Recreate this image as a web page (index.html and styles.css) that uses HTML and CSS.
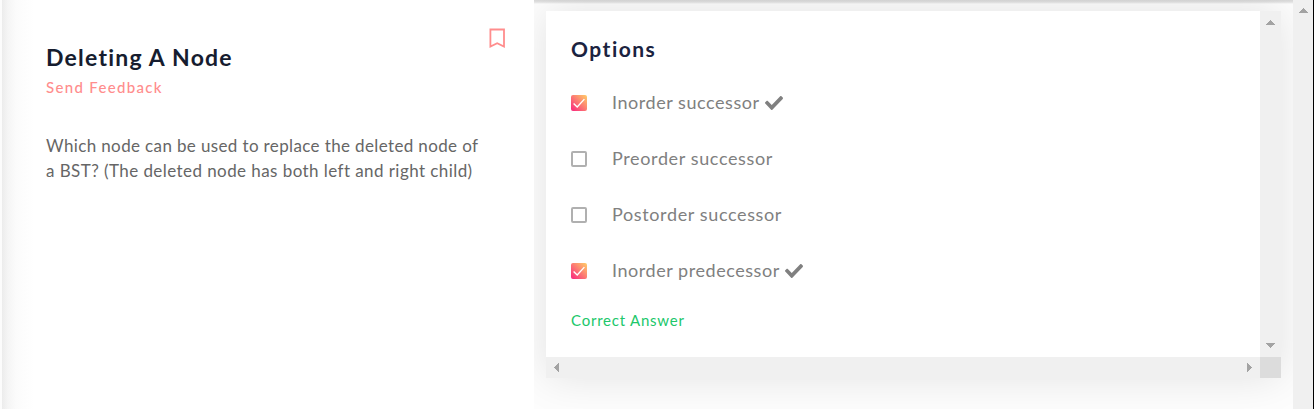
FILE: index.html
```
<!DOCTYPE html>
<html lang="en">
<head>
<meta charset="utf-8">
<title>Deleting A Node</title>
<link rel="stylesheet" href="styles.css">
</head>
<body>
<main class="page">
  <section class="problem">
    <header class="problem-head">
      <h1 class="title">Deleting A Node</h1>
      <svg class="bookmark" width="16" height="20" viewBox="0 0 16 20"><path d="M1.400 1.500h13.600v17L8.200 15.200l-6.800 3.300z" fill="none" stroke="#ff8d8d" stroke-width="1.800"/></svg>
    </header>
    <a class="feedback">Send Feedback</a>
    <p class="question">Which node can be used to replace the deleted node of<br><span class="second-line">a BST? (The deleted node has both left and right child)</span></p>
  </section>
  <section class="answers">
    <div class="scroller">
      <div class="card">
        <h2 class="heading">Options</h2>
        <ul class="options">
          <li class="option">
            <span class="box checked"><svg width="16" height="16" viewBox="0 0 16 16"><path d="M2.600 8.500l3.600 3.400 7.200-7.800" fill="none" stroke="#fff" stroke-width="1.400"/></svg></span>
            <span class="label">Inorder successor</span>
            <svg class="tick" width="18" height="14" viewBox="0 65 512 382" preserveAspectRatio="none"><path d="M173.900 439.400L7.500 273c-10-10-10-26.200 0-36.200l36.200-36.200c10-10 26.200-10 36.200 0L192 312.700 432.100 72.600c10-10 26.200-10 36.200 0l36.200 36.200c10 10 10 26.200 0 36.200L210.100 439.400c-10 10-26.200 10-36.200 0z" fill="#808080"/></svg>
          </li>
          <li class="option">
            <span class="box"></span>
            <span class="label wide">Preorder successor</span>
          </li>
          <li class="option">
            <span class="box"></span>
            <span class="label wide">Postorder successor</span>
          </li>
          <li class="option">
            <span class="box checked"><svg width="16" height="16" viewBox="0 0 16 16"><path d="M2.600 8.500l3.600 3.400 7.200-7.800" fill="none" stroke="#fff" stroke-width="1.400"/></svg></span>
            <span class="label">Inorder predecessor</span>
            <svg class="tick" width="18" height="14" viewBox="0 65 512 382" preserveAspectRatio="none"><path d="M173.900 439.400L7.500 273c-10-10-10-26.200 0-36.200l36.200-36.200c10-10 26.200-10 36.200 0L192 312.700 432.100 72.600c10-10 26.200-10 36.200 0l36.200 36.200c10 10 10 26.200 0 36.200L210.100 439.400c-10 10-26.200 10-36.200 0z" fill="#808080"/></svg>
          </li>
        </ul>
        <p class="result">Correct Answer</p>
      </div>
      <div class="bar vertical">
        <svg width="9" height="5" viewBox="0 0 9 5" shape-rendering="crispEdges"><path d="M0 5L4.500 0 9 5z" fill="#a3a3a3"/></svg>
        <svg width="9" height="5" viewBox="0 0 9 5" shape-rendering="crispEdges"><path d="M0 0L4.500 5 9 0z" fill="#a3a3a3"/></svg>
      </div>
      <div class="bar horizontal">
        <svg width="5" height="9" viewBox="0 0 5 9" shape-rendering="crispEdges"><path d="M5 0L0 4.500 5 9z" fill="#a3a3a3"/></svg>
        <svg width="5" height="9" viewBox="0 0 5 9" shape-rendering="crispEdges"><path d="M0 0L5 4.500 0 9z" fill="#a3a3a3"/></svg>
      </div>
      <div class="corner"></div>
    </div>
  </section>
  <div class="page-bar">
    <svg width="9" height="5" viewBox="0 0 9 5" shape-rendering="crispEdges"><path d="M0 5L4.500 0 9 5z" fill="#a3a3a3"/></svg>
  </div>
</main>
</body>
</html>
```
FILE: styles.css
```
* { box-sizing: border-box; }
body {
  margin: 0;
  overflow: hidden;
  font-family: Lato, "Open Sans", sans-serif;
}
h1, h2, p, ul { margin: 0; padding: 0; }
svg { display: block; flex: none; }
.page {
  display: grid;
  grid-template-columns: 532px 759px 20px;
  width: 1314px;
  height: 409px;
  border-left: 2px solid #fcfcfc;
  border-right: 1px solid #000;
}
.problem {
  padding: 28px 28px 0 44px;
  background: linear-gradient(90deg, #ececec 0, #f5f5f5 6px, #fbfbfb 14px, #fff 32px);
  white-space: nowrap;
}
.problem-head {
  display: flex;
  justify-content: space-between;
  height: 45px;
}
.bookmark { margin-right: 1px; }
.title {
  padding-top: 14px;
  font-size: 23px;
  line-height: 30px;
  font-weight: 700;
  letter-spacing: 1.22px;
  color: #161d2f;
}
.feedback {
  display: block;
  padding-top: 4px;
  font-size: 15px;
  line-height: 20px;
  font-weight: 500;
  letter-spacing: 1.33px;
  color: #ff8d8d;
}
.question {
  padding-top: 36px;
  font-size: 17px;
  line-height: 25px;
  letter-spacing: 0.37px;
  color: #666;
}
.second-line { letter-spacing: 0.43px; }
.answers {
  padding: 11px 12px 0;
  overflow: hidden;
  background: linear-gradient(180deg, #d8d8d8 0, #e2e2e2 2px, rgba(240,240,240,0) 4px), #fdfdfd;
}
.scroller {
  display: grid;
  grid-template: 346px 21px / 714px 21px;
  box-shadow: 0 0 40px rgba(0,0,0,0.11);
}
.card {
  padding: 24px 25px 0;
  background: #fff;
}
.heading {
  font-size: 21px;
  line-height: 28px;
  font-weight: 700;
  letter-spacing: 1.5px;
  color: #1b2340;
}
.options {
  padding-top: 23px;
  list-style: none;
}
.option {
  display: flex;
  align-items: center;
  height: 34px;
  margin-bottom: 22px;
}
.box {
  width: 16px;
  height: 16px;
  margin-right: 25px;
  border: 2px solid #b0b0b0;
  border-radius: 2px;
}
.box.checked {
  border: 0;
  background: linear-gradient(45deg, #f9247e, #ffcf68);
}
.label {
  padding-bottom: 2px;
  font-size: 18px;
  line-height: 24px;
  letter-spacing: 0.55px;
  color: #808080;
}
.label.wide { letter-spacing: 0.63px; }
.tick {
  margin-left: 5px;
  margin-bottom: 1px;
}
.result {
  font-size: 15px;
  line-height: 20px;
  letter-spacing: 0.78px;
  color: #20c76a;
}
.bar {
  display: flex;
  align-items: center;
  justify-content: space-between;
  background: #f0f0f0;
}
.vertical { flex-direction: column; padding: 9px 0; }
.horizontal { padding: 0 8px; }
.corner { background: #dcdcdc; }
.page-bar {
  display: flex;
  justify-content: center;
  padding-top: 8px;
  background: #f0f0f0;
}
```
